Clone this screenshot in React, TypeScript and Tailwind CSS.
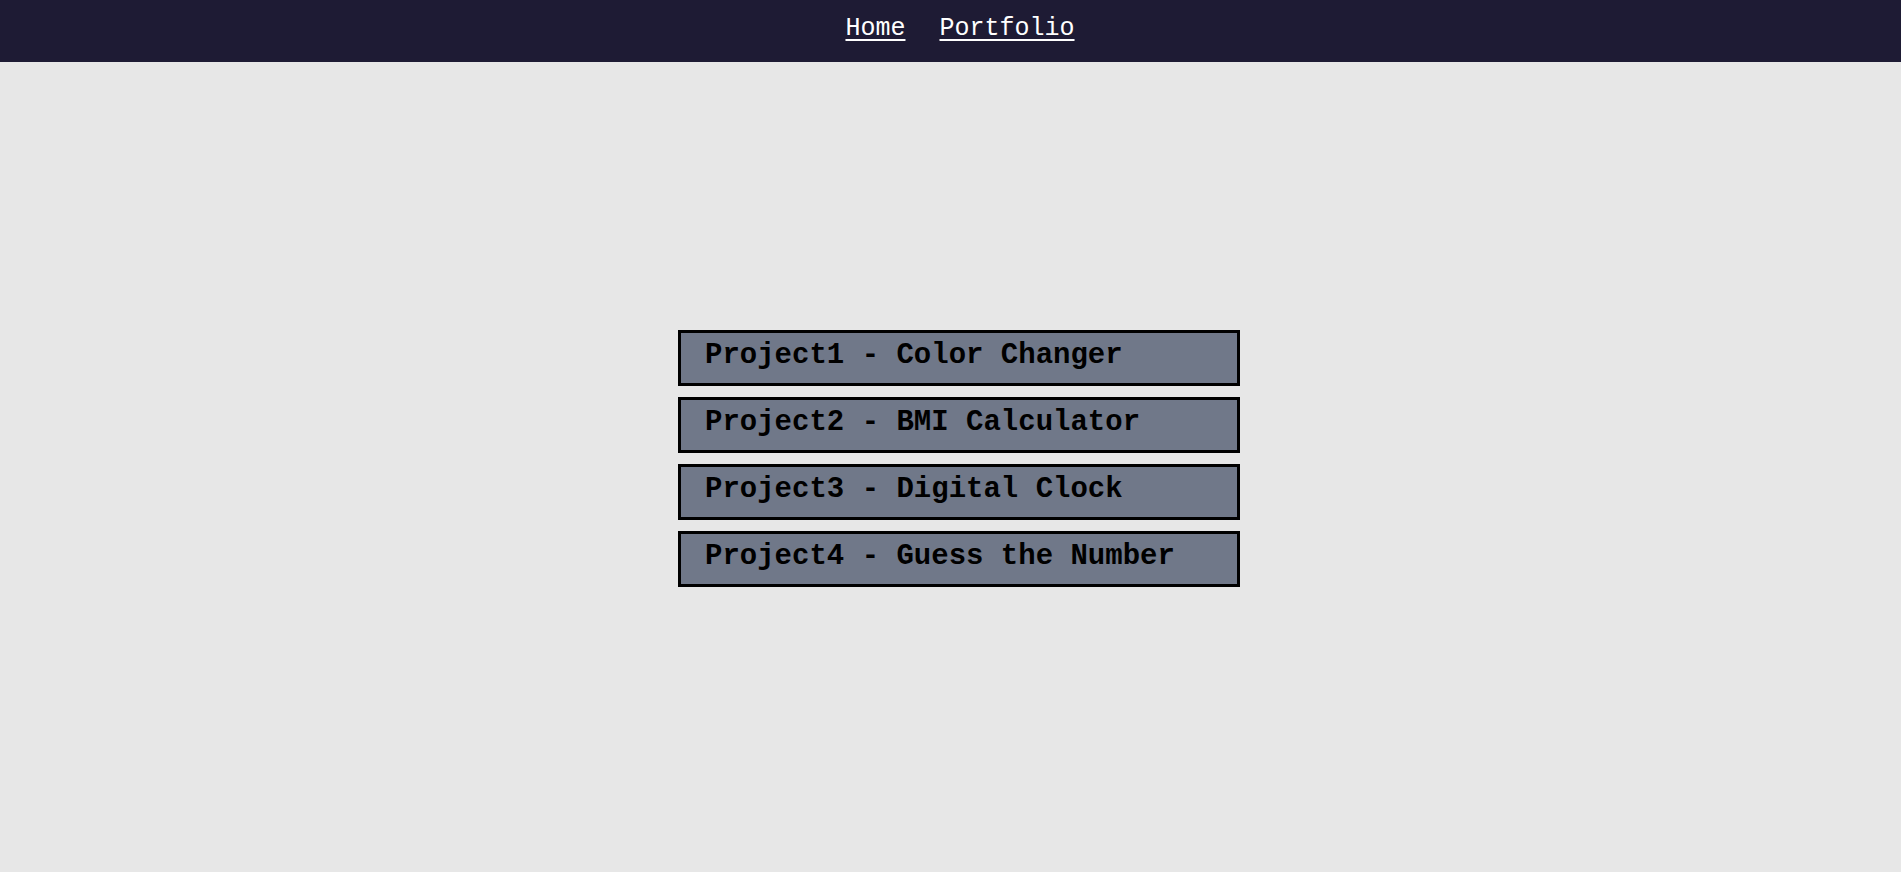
import React from 'react';

const projects = [
  'Project1 - Color Changer',
  'Project2 - BMI Calculator',
  'Project3 - Digital Clock',
  'Project4 - Guess the Number',
];

const App: React.FC = () => {
  return (
    <div
      className="min-h-screen bg-[#e7e7e7]"
      style={{ fontFamily: '"Nimbus Mono PS", Courier, "Courier New", "Liberation Mono", monospace' }}
    >
      <nav className="h-[62px] bg-[#1e1b34] flex justify-center pl-[19px] pt-[14px]">
        <ul className="flex gap-[34px] text-[25px] text-white leading-[29px]">
          <li>
            <a href="#" className="underline underline-offset-[4px]">Home</a>
          </li>
          <li>
            <a href="#" className="underline underline-offset-[4px]">Portfolio</a>
          </li>
        </ul>
      </nav>
      <main className="flex justify-center pt-[268px] pl-[17px]">
        <div className="flex flex-col gap-[11px] w-[562px]">
          {projects.map((p) => (
            <div
              key={p}
              className="border-[3px] border-black bg-[#707889] pl-[24px] pt-[6px] pb-[11px]"
            >
              <h3 className="text-[29px] font-bold text-black leading-[33px]">{p}</h3>
            </div>
          ))}
        </div>
      </main>
    </div>
  );
};

export default App;
